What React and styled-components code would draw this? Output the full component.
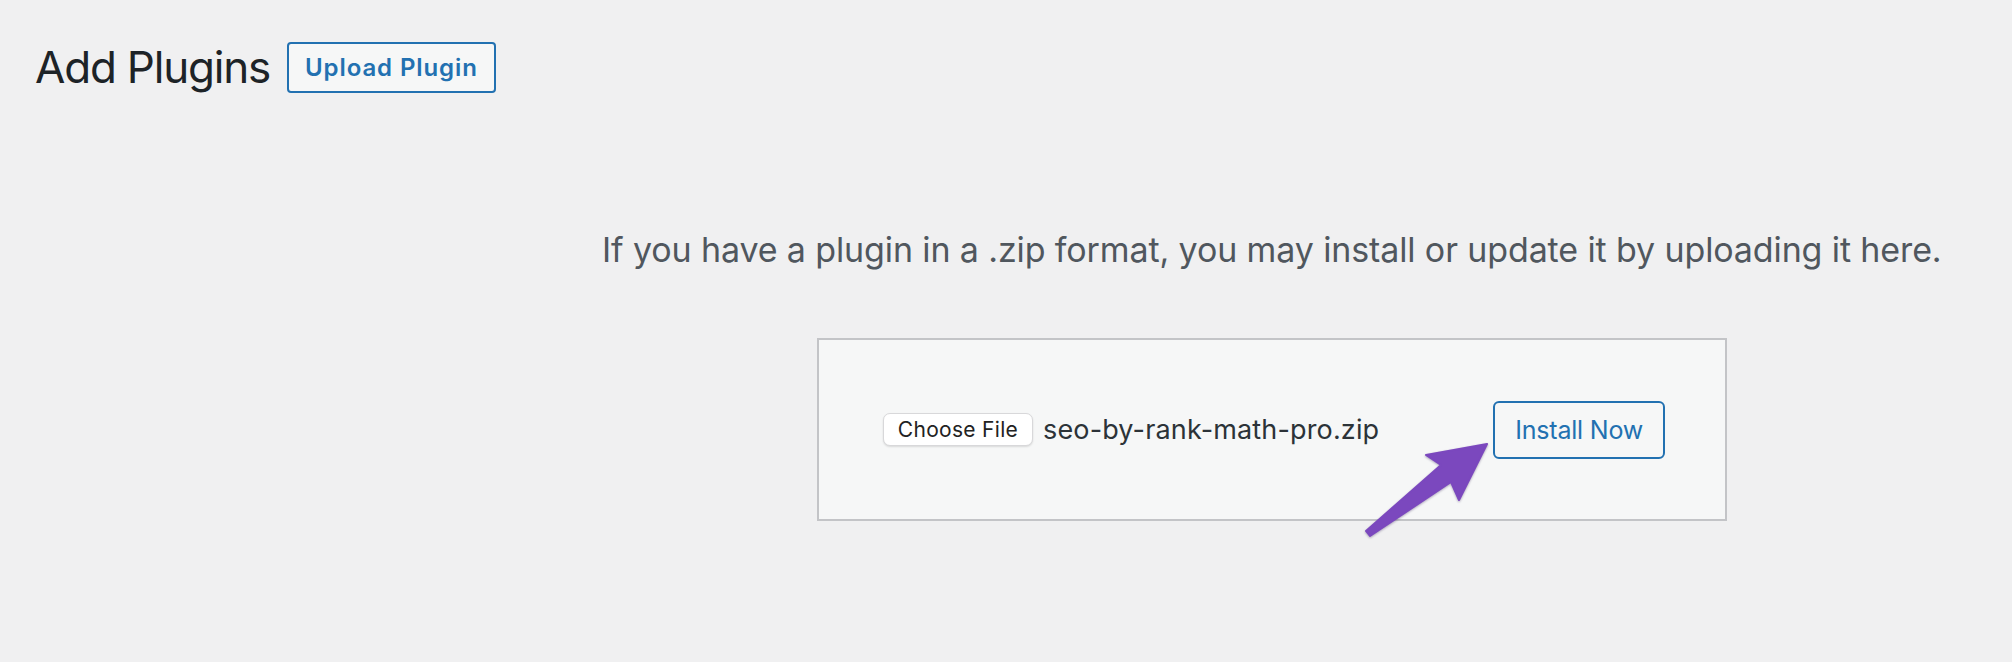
import React from "react";
import styled, { createGlobalStyle } from "styled-components";

const Global = createGlobalStyle`
    html, body {
        margin: 0;
        padding: 0;
        background: #f0f0f1;
        font-family: Inter, "Noto Sans", sans-serif;
    }
`;

const Page = styled.div`
    min-height: 662px;
    padding: 42px 0 0 35px;
    box-sizing: border-box;
`;

const Header = styled.div`
    display: flex;
    align-items: center;
    gap: 17px;
    height: 51px;
`;

const Title = styled.h1`
    margin: 0;
    font-size: 44px;
    font-weight: 400;
    letter-spacing: -1.2px;
    color: #1d2327;
    line-height: 51px;
`;

const OutlineButton = styled.button`
    box-sizing: border-box;
    height: ${(p) => p.$h}px;
    padding: 0 ${(p) => p.$px}px;
    border: 2px solid #2271b1;
    border-radius: ${(p) => p.$r}px;
    background: #f6f7f7;
    color: #2271b1;
    font-family: Inter, sans-serif;
    font-size: ${(p) => p.$fs}px;
    font-weight: ${(p) => p.$fw};
    letter-spacing: ${(p) => p.$ls}px;
    cursor: pointer;
`;

const Upload = styled.div`
    padding: 137px 0 0 567px;
`;

const Help = styled.p`
    margin: 0;
    font-size: 34px;
    line-height: 40px;
    letter-spacing: -0.12px;
    color: #50575e;
    white-space: nowrap;
`;

const Form = styled.form`
    position: relative;
    box-sizing: border-box;
    width: 910px;
    height: 183px;
    margin: 68px 0 0 215px;
    padding: 0 60px 0 64px;
    display: flex;
    align-items: center;
    justify-content: space-between;
    background: #f6f7f7;
    border: 2px solid #c3c4c7;
`;

const FileField = styled.div`
    display: flex;
    align-items: center;
    gap: 10px;
`;

const ChooseButton = styled.button`
    box-sizing: border-box;
    width: 150px;
    height: 33px;
    border: 1px solid #d8d8da;
    border-radius: 7px;
    background: #fff;
    box-shadow: 0 1px 2px rgba(0, 0, 0, 0.12);
    font-family: Inter, sans-serif;
    font-size: 21px;
    letter-spacing: 0.3px;
    color: #222;
    padding: 0;
`;

const FileName = styled.span`
    font-size: 27px;
    color: #2c3338;
    letter-spacing: 0.15px;
`;

const Arrow = styled.svg`
    position: absolute;
    left: 531px;
    top: 90px;
    filter: drop-shadow(0 1px 1px rgba(40, 20, 80, 0.35));
`;

export default function App() {
    return (
        <>
            <Global />
            <Page>
                <Header>
                    <Title>Add Plugins</Title>
                    <OutlineButton $h={51} $px={16} $r={4} $fs={24} $fw={600} $ls={0.9}>
                        Upload Plugin
                    </OutlineButton>
                </Header>
                <Upload>
                    <Help>If you have a plugin in a .zip format, you may install or update it by uploading it here.</Help>
                    <Form onSubmit={(e) => e.preventDefault()}>
                        <FileField>
                            <ChooseButton type="button">Choose File</ChooseButton>
                            <FileName>seo-by-rank-math-pro.zip</FileName>
                        </FileField>
                        <OutlineButton $h={58} $px={20} $r={6} $fs={25} $fw={400} $ls={-0.2}>
                            Install Now
                        </OutlineButton>
                        <Arrow width="150" height="120" viewBox="1350 430 150 120">
                            <path
                                d="M1487 444 L1426 455 L1441 465 L1366 531 L1370 536 L1451 482 L1459 500 Z"
                                fill="#7b48be"
                                stroke="#7b48be"
                                strokeWidth="2"
                                strokeLinejoin="round"
                            />
                        </Arrow>
                    </Form>
                </Upload>
            </Page>
        </>
    );
}
